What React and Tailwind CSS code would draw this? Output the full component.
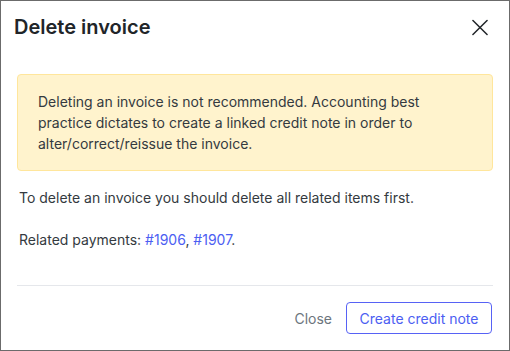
export default function App() {
  return (
    <div
      className="flex h-[351px] w-[510px] flex-col border border-[#6b6b6b] bg-white text-[#212529]"
      style={{ fontFamily: "Inter, 'Noto Sans', sans-serif" }}
    >
      <div className="flex items-center justify-between pl-[13px] pr-[21px] pt-[14px]">
        <h1 className="text-[20px] font-semibold leading-[24px] text-[#212529]">
          Delete invoice
        </h1>
        <button className="flex h-4 w-4 items-center justify-center text-[#212529]">
          <svg width="17" height="17" viewBox="0 0 17 17" fill="none">
            <path
              d="M1 1L16 16M16 1L1 16"
              stroke="currentColor"
              strokeWidth="1.6"
              strokeLinecap="round"
            />
          </svg>
        </button>
      </div>

      <div className="px-4 pt-[35px] text-[14px] leading-[21px]">
        <div className="rounded border border-[#ffe69c] bg-[#fff3cd] px-5 py-4 text-[#343a40]">
          Deleting an invoice is not recommended. Accounting best practice
          dictates to create a linked credit note in order to
          alter/correct/reissue the invoice.
        </div>

        <p className="mt-4 px-[2px] text-[#343a40]">
          To delete an invoice you should delete all related items first.
        </p>
        <p className="mt-[21px] px-[2px] text-[#343a40]">
          Related payments:{" "}
          <a href="#" className="text-[#4c5ef2]">
            #1906
          </a>
          ,{" "}
          <a href="#" className="text-[#4c5ef2]">
            #1907
          </a>
          .
        </p>
      </div>

      <div className="mx-4 mt-auto border-t border-[#e5e7eb]" />

      <div className="flex items-center justify-end gap-[14px] pb-[16px] pl-4 pr-[17px] pt-[16px] text-[14px]">
        <button className="text-[#6c757d]">Close</button>
        <button className="flex h-8 w-[146px] items-center justify-center rounded border border-[#5762f5] text-[#4c5ef2]">
          Create credit note
        </button>
      </div>
    </div>
  );
}
